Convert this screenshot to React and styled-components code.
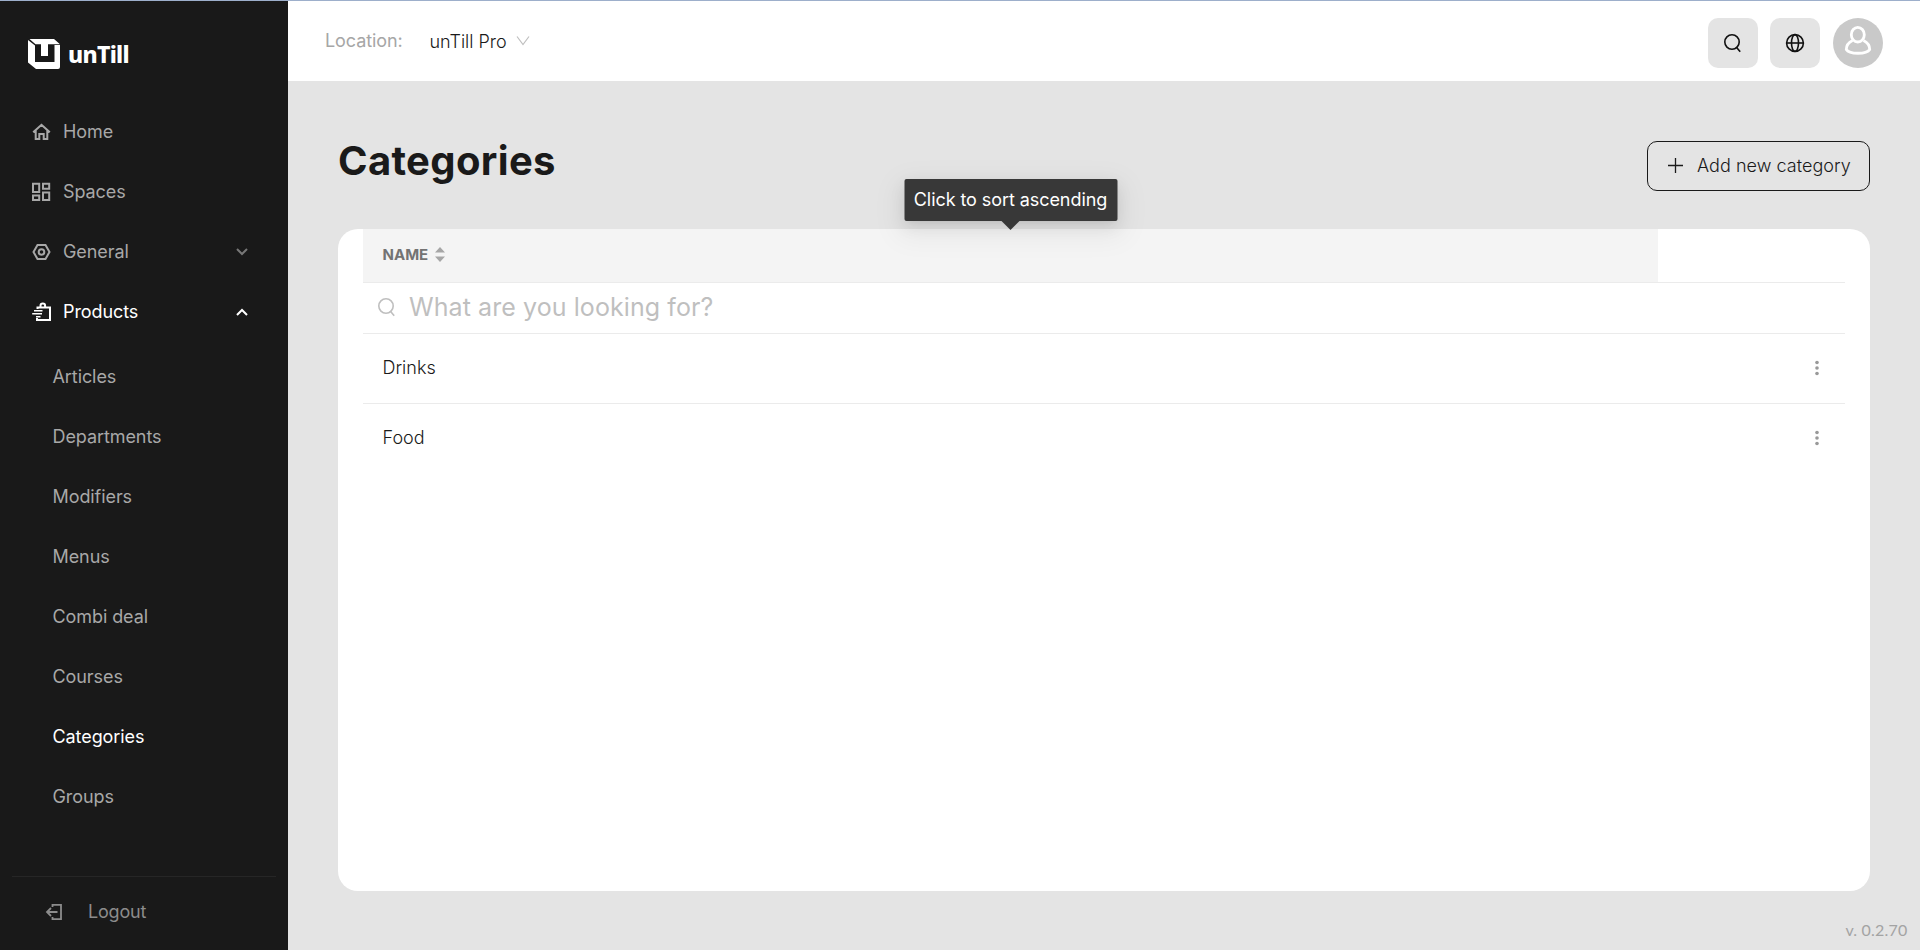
import React from "react";
import styled, { createGlobalStyle, css } from "styled-components";

const Global = createGlobalStyle`
  * { box-sizing: border-box; }
  body {
    margin: 0;
    background: #e4e4e4;
    font-family: Inter, "Liberation Sans", sans-serif;
    font-size: 18px;
    color: #1a1a1a;
  }
  svg { display: block; flex: none; }
`;

const Page = styled.div`
  display: flex;
  height: 950px;
  border-top: 1px solid #9dafcb;
  overflow: hidden;
`;

const Sidebar = styled.aside`
  width: 288px;
  flex: none;
  display: flex;
  flex-direction: column;
  background: #191919;
`;

const Brand = styled.div`
  display: flex;
  align-items: center;
  gap: 7px;
  height: 101px;
  padding: 5px 0 0 28px;
`;

const Wordmark = styled.span`
  padding-bottom: 1px;
  font-family: "Noto Sans", sans-serif;
  font-size: 23px;
  font-weight: 800;
  line-height: 30px;
  letter-spacing: -0.7px;
  color: #fff;
`;

const Nav = styled.nav`
  display: flex;
  flex-direction: column;
`;

const itemText = css`
  display: flex;
  align-items: center;
  height: 60px;
  color: ${(p) => (p.$active ? "#fff" : "#a8a8a8")};
  line-height: 24px;
  letter-spacing: -0.08px;
`;

const NavItem = styled.a`
  ${itemText}
  gap: 12px;
  padding: 0 40px 0 31px;
`;

const NavLabel = styled.span`
  flex: 1;
`;

const SubNav = styled.div`
  display: flex;
  flex-direction: column;
  padding-top: 5px;
`;

const SubItem = styled.a`
  ${itemText}
  padding-left: 52.5px;
`;

const Logout = styled.a`
  display: flex;
  align-items: center;
  gap: 23px;
  height: 74px;
  margin: auto 12px 0;
  padding: 0 0 4px 33px;
  border-top: 1px solid #262626;
  color: #8c8c8c;
  letter-spacing: -0.2px;
`;

const Main = styled.main`
  flex: 1;
  display: flex;
  flex-direction: column;
`;

const TopBar = styled.header`
  display: flex;
  align-items: center;
  height: 80px;
  padding: 3px 37px 0 37px;
  background: #fff;
`;

const LocationLabel = styled.span`
  width: 104.5px;
  padding-bottom: 5px;
  letter-spacing: -0.1px;
  color: #a6a6a6;
`;

const LocationSelect = styled.div`
  display: flex;
  align-items: center;
  gap: 9px;
  flex: 1;
  padding-bottom: 3px;
  font-weight: 300;
  color: #1a1a1a;
`;

const Actions = styled.div`
  display: flex;
  align-items: center;
  gap: 12px;
`;

const IconButton = styled.button`
  display: flex;
  align-items: center;
  justify-content: center;
  width: 50px;
  height: 50px;
  padding: 0;
  border: 0;
  border-radius: 10px;
  background: #e4e4e4;
  color: #111;
`;

const Avatar = styled.div`
  display: flex;
  justify-content: center;
  width: 50px;
  height: 50px;
  margin-left: 1px;
  padding-top: 7px;
  border-radius: 50%;
  background: #c9c9c9;
`;

const Content = styled.section`
  flex: 1;
  display: flex;
  flex-direction: column;
  padding: 60px 50px 0;
`;

const TitleRow = styled.div`
  display: flex;
  align-items: flex-start;
  justify-content: space-between;
  height: 88px;
`;

const Title = styled.h1`
  margin: -5px 0 0;
  font-size: 40px;
  line-height: 50px;
  font-weight: 700;
  letter-spacing: 0.35px;
`;

const AddButton = styled.button`
  display: flex;
  align-items: center;
  gap: 14px;
  width: 223px;
  height: 50px;
  padding: 0 0 1px 20px;
  border: 1px solid #1a1a1a;
  border-radius: 10px;
  background: transparent;
  font: 300 18px/24px Inter, sans-serif;
  letter-spacing: 0.04px;
  color: #1a1a1a;
  white-space: nowrap;
`;

const Card = styled.div`
  height: 662px;
  padding: 0 25px;
  border-radius: 20px;
  background: #fff;
`;

const HeadRow = styled.div`
  height: 54px;
  display: flex;
  border-bottom: 1px solid #ebebeb;
`;

const HeadCell = styled.div`
  position: relative;
  display: flex;
  align-items: center;
  gap: 7px;
  width: 1295px;
  padding: 0 0 2px 19.5px;
  background: #f4f4f4;
  font-family: Inter, sans-serif;
  font-size: 15px;
  font-weight: 700;
  color: #737373;
`;

const Tooltip = styled.div`
  position: absolute;
  left: 50%;
  bottom: 61px;
  transform: translateX(-50%);
  height: 42px;
  width: 213px;
  display: flex;
  align-items: center;
  justify-content: center;
  border-radius: 2px;
  background: #383838;
  color: #fff;
  font: 400 18px/24px Inter, sans-serif;
  letter-spacing: -0.07px;
  white-space: nowrap;
  box-shadow: 0 3px 6px -4px rgba(0, 0, 0, 0.12), 0 6px 16px 0 rgba(0, 0, 0, 0.08),
    0 9px 28px 8px rgba(0, 0, 0, 0.05);

  &::after {
    content: "";
    position: absolute;
    top: 100%;
    left: 50%;
    margin-left: -9px;
    border: 9px solid transparent;
    border-top-color: #383838;
    border-bottom: 0;
  }
`;

const SearchRow = styled.label`
  display: flex;
  align-items: center;
  gap: 12px;
  height: 51px;
  padding: 0 0 2px 14px;
  border-bottom: 1px solid #ebebeb;
  font-size: 25px;
  letter-spacing: 0.08px;
  color: #bfbfbf;
`;

const Row = styled.div`
  display: flex;
  align-items: center;
  justify-content: space-between;
  height: 70px;
  padding: 0 26.5px 2px 19.5px;
  border-bottom: 1px solid ${(p) => (p.$last ? "transparent" : "#ebebeb")};
  font-weight: 300;
`;

const Version = styled.footer`
  display: flex;
  justify-content: flex-end;
  margin: 29px -37.5px 0 0;
  font-family: Lato, sans-serif;
  font-size: 16px;
  line-height: 20px;
  letter-spacing: 0.2px;
  color: #a3a3a3;
`;

function Icon({ size = 20, w = 1.8, children }) {
  return (
    <svg width={size} height={size} viewBox={`0 0 ${size} ${size}`} fill="none" stroke="currentColor" strokeWidth={w}>
      {children}
    </svg>
  );
}

const Logo = () => (
  <svg width="33" height="30" viewBox="0 0 33 30" fill="#fff">
    <path d="M1.500 0H26l6 5.300H20V17H13V5.300H7.500z" />
    <path d="M0 1L7 6.500V23H26.500V6h5.500V28q0 2-2 2H8L0 23.500z" />
  </svg>
);

const HomeIcon = () => (
  <Icon w={2}>
    <path d="M2.200 10.300L10.500 2.800l8.300 7.500M4.700 8.500v8.500h3.600v-5h4.400v5h3.600V8.500" />
  </Icon>
);
const SpacesIcon = () => (
  <Icon w={2}>
    <path d="M2 1.800h6.200v8.200H2zM12 1.800h6.200v5H12zM2 13.500h6.200v4.500H2zM12 10.500h6.200V18H12z" />
  </Icon>
);
const GeneralIcon = () => (
  <Icon w={2}>
    <path d="M6.500 3h8l4 7-4 7h-8l-4-7z" />
    <circle cx="10.500" cy="10" r="2.800" />
  </Icon>
);
const ProductsIcon = () => (
  <Icon w={2}>
    <path d="M6.500 7V5.500H19V18H6v-2M9.500 5V3.700a2.300 2.300 0 0 1 4.600 0V5" />
    <path d="M3 8.700h8.500M1.200 11.800H11M5 14.800h4.500" strokeWidth="1.600" />
  </Icon>
);
const LogoutIcon = () => (
  <Icon>
    <path d="M7.500 5V2.800H16v14.400H7.500V15M12.500 10H2.200M6 6L2 10l4 4" />
  </Icon>
);
const ToggleIcon = ({ up }) => (
  <svg width="12" height="8" viewBox="0 0 12 8" fill="none" stroke={up ? "#fff" : "#777"} strokeWidth="2">
    <path d={up ? "M1 7l5-5 5 5" : "M1 1l5 5 5-5"} />
  </svg>
);
const SearchIcon = ({ w }) => (
  <Icon w={w}>
    <circle cx="9" cy="9" r="7.200" />
    <path d="M13.200 14l4 4.800" />
  </Icon>
);
const GlobeIcon = () => (
  <Icon w={1.6}>
    <circle cx="10" cy="10" r="8.400" />
    <ellipse cx="10" cy="10" rx="3.500" ry="8.400" />
    <path d="M1.600 10h16.800" />
  </Icon>
);
const UserIcon = () => (
  <svg width="30" height="32" viewBox="0 0 30 32" fill="none" stroke="#fff" strokeWidth="2.800">
    <ellipse cx="14.800" cy="9.700" rx="6.500" ry="7.300" />
    <path d="M9.500 15.500C5.500 17.500 3.300 20.500 3.300 24.500c3 5 20.400 5 23.400 0 0-4-2.200-7-6.200-9" />
  </svg>
);
const SortIcon = () => (
  <svg width="10" height="15" viewBox="0 0 10 15" fill="#a6a6a6">
    <path d="M5 0l5 5.500H0zM5 15l5-5.500H0z" />
  </svg>
);
const DotsIcon = () => (
  <svg width="4" height="16" viewBox="0 0 4 16" fill="#999">
    <circle cx="2" cy="2.500" r="1.800" />
    <circle cx="2" cy="8" r="1.800" />
    <circle cx="2" cy="13.500" r="1.800" />
  </svg>
);

const menu = [
  { label: "Home", icon: <HomeIcon /> },
  { label: "Spaces", icon: <SpacesIcon /> },
  { label: "General", icon: <GeneralIcon />, toggle: "down" },
  { label: "Products", icon: <ProductsIcon />, toggle: "up", active: true },
];
const products = ["Articles", "Departments", "Modifiers", "Menus", "Combi deal", "Courses", "Categories", "Groups"];
const categories = ["Drinks", "Food"];

export default function App() {
  return (
    <>
      <Global />
      <Page>
        <Sidebar>
          <Brand>
            <Logo />
            <Wordmark>unTill</Wordmark>
          </Brand>
          <Nav>
            {menu.map((m) => (
              <NavItem key={m.label} $active={m.active}>
                {m.icon}
                <NavLabel>{m.label}</NavLabel>
                {m.toggle && <ToggleIcon up={m.toggle === "up"} />}
              </NavItem>
            ))}
            <SubNav>
              {products.map((p) => (
                <SubItem key={p} $active={p === "Categories"}>{p}</SubItem>
              ))}
            </SubNav>
          </Nav>
          <Logout>
            <LogoutIcon />
            Logout
          </Logout>
        </Sidebar>
        <Main>
          <TopBar>
            <LocationLabel>Location:</LocationLabel>
            <LocationSelect>
              unTill Pro
              <svg width="14" height="10" viewBox="0 0 14 10" fill="none" stroke="#bfbfbf" strokeWidth="1.200">
                <path d="M1 .5l6 8 6-8" />
              </svg>
            </LocationSelect>
            <Actions>
              <IconButton><SearchIcon w={1.6} /></IconButton>
              <IconButton><GlobeIcon /></IconButton>
              <Avatar><UserIcon /></Avatar>
            </Actions>
          </TopBar>
          <Content>
            <TitleRow>
              <Title>Categories</Title>
              <AddButton>
                <svg width="15" height="15" viewBox="0 0 15 15" stroke="#1a1a1a" strokeWidth="1.300">
                  <path d="M0 7.500h15M7.500 0v15" />
                </svg>
                Add new category
              </AddButton>
            </TitleRow>
            <Card>
              <HeadRow>
                <HeadCell>
                  NAME
                  <SortIcon />
                  <Tooltip>Click to sort ascending</Tooltip>
                </HeadCell>
              </HeadRow>
              <SearchRow>
                <SearchIcon w={1.6} />
                What are you looking for?
              </SearchRow>
              {categories.map((c, i) => (
                <Row key={c} $last={i === categories.length - 1}>
                  {c}
                  <DotsIcon />
                </Row>
              ))}
            </Card>
            <Version>v. 0.2.70</Version>
          </Content>
        </Main>
      </Page>
    </>
  );
}
